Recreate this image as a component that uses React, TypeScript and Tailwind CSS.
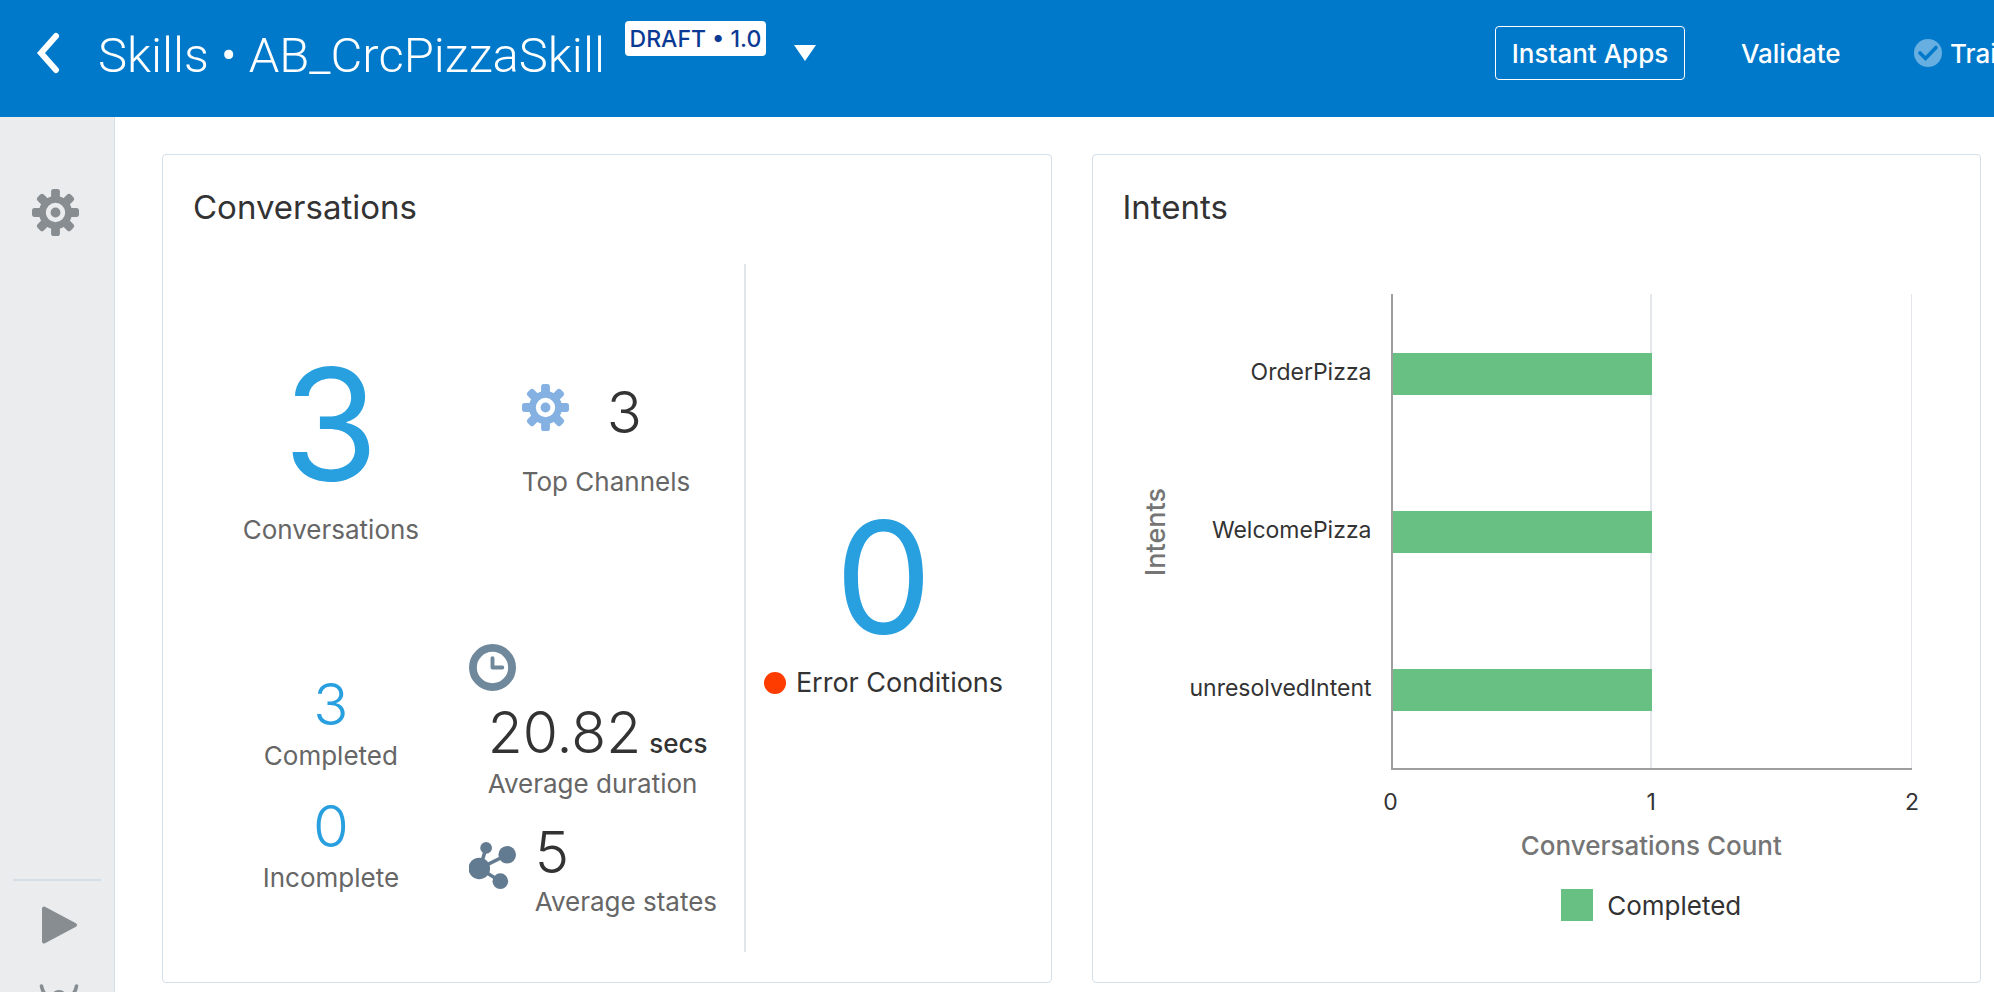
import React from "react";

type IconProps = { className?: string };

const TEETH = [0, 45, 90, 135, 180, 225, 270, 315];

function Gear({ className }: IconProps) {
  return (
    <svg viewBox="-24 -24 48 48" className={className} fill="currentColor" aria-hidden="true">
      {TEETH.map((angle) => (
        <rect key={angle} x="-4.5" y="-24" width="9" height="12" rx="2.6" transform={`rotate(${angle})`} />
      ))}
      <circle r="13.4" fill="none" stroke="currentColor" strokeWidth="7" />
      <circle r="5" />
    </svg>
  );
}

function Clock({ className }: IconProps) {
  return (
    <svg viewBox="0 0 48 48" className={className} fill="none" stroke="currentColor" aria-hidden="true">
      <circle cx="24" cy="24" r="20" strokeWidth="8" />
      <path d="M24 14.5V24h10" strokeWidth="4" strokeLinecap="round" strokeLinejoin="round" />
    </svg>
  );
}

function Nodes({ className }: IconProps) {
  return (
    <svg viewBox="0 0 48 48" className={className} fill="currentColor" aria-hidden="true">
      <path d="M11 27 17.5 6M11 27 39 13M11 27l21 13" stroke="currentColor" strokeWidth="3.6" fill="none" />
      <circle cx="10.5" cy="27" r="11" />
      <circle cx="17.5" cy="6" r="6" />
      <circle cx="39" cy="13" r="9" />
      <circle cx="32" cy="40" r="8" />
    </svg>
  );
}

function Header() {
  return (
    <header className="flex h-[117px] shrink-0 items-start overflow-hidden bg-[#0079cb] text-white">
      <button type="button" aria-label="Back" className="ml-9 mt-8 h-[42px] w-6 shrink-0">
        <svg viewBox="0 0 24 42" className="h-full w-full" fill="none" aria-hidden="true">
          <path d="M20 4 5 21l15 17" stroke="white" strokeWidth="6" strokeLinecap="round" />
        </svg>
      </button>
      <h1 className="ml-[38px] mt-7 whitespace-nowrap font-['Roboto','Inter',sans-serif] text-[49px] font-light leading-[56px]">
        Skills • AB_CrcPizzaSkill
      </h1>
      <span className="ml-5 mt-[21px] h-[35px] w-[141px] shrink-0 whitespace-nowrap rounded bg-white text-center text-[23px] font-medium leading-[36px] text-[#0b3a94]">
        DRAFT • 1.0
      </span>
      <button type="button" aria-label="Select version" className="ml-7 mt-[45px] shrink-0">
        <svg viewBox="0 0 22 16" className="h-4 w-[22px]" fill="white" aria-hidden="true">
          <path d="M0 0h22L11 16z" />
        </svg>
      </button>
      <nav className="ml-auto mt-[26px] flex h-[54px] w-[499px] shrink-0 items-stretch text-[26px] font-medium leading-9">
        <button type="button" className="w-[190px] rounded-[4px] border border-white pt-[2px]">
          Instant Apps
        </button>
        <button type="button" className="ml-14 pt-[2px]">
          Validate
        </button>
        <button type="button" className="ml-auto flex w-20 items-center gap-2 overflow-hidden">
          <svg viewBox="0 0 28 28" className="h-7 w-7 shrink-0" aria-hidden="true">
            <circle cx="14" cy="14" r="14" fill="#66afe0" />
            <path d="m6 14 5.500 5.500L22 8.500" fill="none" stroke="#0079cb" strokeWidth="3.600" strokeLinecap="round" />
          </svg>
          <span className="pt-[2px]">Train</span>
        </button>
      </nav>
    </header>
  );
}

function Sidebar() {
  return (
    <aside className="flex w-[115px] shrink-0 flex-col items-center overflow-hidden border-r border-[#d3dfe9] bg-[#eaecee] text-[#878d91]">
      <button type="button" aria-label="Settings" className="mr-1 mt-[72px]">
        <Gear className="h-[47px] w-[47px]" />
      </button>
      <div className="mt-auto w-[88px] shrink-0 border-t-2 border-[#d3dfe9]" />
      <button type="button" aria-label="Run" className="ml-[6px] mt-6">
        <svg viewBox="0 0 36 40" className="h-10 w-9" fill="currentColor" aria-hidden="true">
          <path d="M2 3.500 33 20 2 36.500z" stroke="currentColor" strokeWidth="4" strokeLinejoin="round" />
        </svg>
      </button>
      <button type="button" aria-label="Debug" className="ml-1 mt-[38px] h-[9px] overflow-hidden">
        <svg viewBox="0 0 40 40" className="h-10 w-10" fill="none" stroke="currentColor" strokeWidth="3.600" strokeLinecap="round" aria-hidden="true">
          <path d="M2.500 3c1 6 4 10 9 12M37.500 3c-1 6-4 10-9 12" />
          <ellipse cx="20" cy="22" rx="11" ry="15" fill="currentColor" stroke="none" />
        </svg>
      </button>
    </aside>
  );
}

function Card({ title, children }: { title: string; children: React.ReactNode }) {
  return (
    <section className="flex min-w-0 flex-1 flex-col rounded-[4px] border border-[#d3dfe9] px-[30px] pb-[30px] pt-8 text-[#333]">
      <h2 className="text-[33px] leading-10">{title}</h2>
      <div className="mt-[37px] flex min-h-0 flex-1">{children}</div>
    </section>
  );
}

function Label({ children }: { children: React.ReactNode }) {
  return <div className="whitespace-nowrap text-[26px] leading-9 text-[#666]">{children}</div>;
}

function Conversations() {
  return (
    <Card title="Conversations">
      <div className="grid flex-1 grid-cols-[101fr_50fr]">
        <div className="grid grid-cols-2 border-r-2 border-[#dfe6ec]">
          <div className="flex flex-col items-center pt-[84px]">
            <div className="text-[154px] leading-[152px] text-[#289fdf]">3</div>
            <div className="mt-3">
              <Label>Conversations</Label>
            </div>
            <div className="mt-32 text-[58px] font-light leading-[56px] text-[#289fdf]">3</div>
            <div className="mt-[6px]">
              <Label>Completed</Label>
            </div>
            <div className="mt-6 text-[58px] font-light leading-[56px] text-[#289fdf]">0</div>
            <div className="mt-[6px]">
              <Label>Incomplete</Label>
            </div>
          </div>
          <div className="flex flex-col pt-[120px]">
            <div className="pl-[53px]">
              <div className="flex items-start gap-[38px]">
                <Gear className="h-[47px] w-[47px] text-[#84b1e1]" />
                <div className="text-[58px] font-light leading-[56px]">3</div>
              </div>
              <div className="mt-6">
                <Label>Top Channels</Label>
              </div>
            </div>
            <Clock className="mt-36 h-[47px] w-[47px] text-[#6f889b]" />
            <div className="mt-[14px] pl-[19px]">
              <div className="flex items-baseline gap-2 whitespace-nowrap text-[57px] font-light leading-[56px]">
                20.82 <span className="text-[26px] font-medium leading-9">secs</span>
              </div>
              <div className="mt-1">
                <Label>Average duration</Label>
              </div>
            </div>
            <div className="mt-[22px] flex items-start gap-[19px]">
              <Nodes className="mt-[18px] h-[47px] w-[47px] shrink-0 text-[#637b90]" />
              <div>
                <div className="text-[58px] font-light leading-[56px]">5</div>
                <div className="mt-1">
                  <Label>Average states</Label>
                </div>
              </div>
            </div>
          </div>
        </div>
        <div className="flex flex-col items-center justify-center pb-[14px]">
          <div className="text-[154px] leading-[152px] text-[#289fdf]">0</div>
          <div className="mt-3 flex items-center gap-[10px] whitespace-nowrap text-[27px] leading-9">
            <span className="h-[22px] w-[22px] shrink-0 rounded-full bg-[#ff3c00]" />
            Error Conditions
          </div>
        </div>
      </div>
    </Card>
  );
}

const INTENTS = [
  { name: "OrderPizza", completed: 1 },
  { name: "WelcomePizza", completed: 1 },
  { name: "unresolvedIntent", completed: 1 },
];
const AXIS_MAX = 2;

function Intents() {
  return (
    <Card title="Intents">
      <div className="grid flex-1 grid-cols-[36px_auto_1fr] content-start pl-[15px] pr-[38px] pt-[30px]">
        <div className="flex items-center justify-center">
          <span className="rotate-180 text-[27px] font-medium leading-9 text-[#757575] [writing-mode:vertical-rl]">
            Intents
          </span>
        </div>
        <div className="flex w-[217px] flex-col pr-[19px]">
          {INTENTS.map((intent) => (
            <div key={intent.name} className="flex h-[158px] items-center justify-end whitespace-nowrap pb-[2px] text-[23px]">
              {intent.name}
            </div>
          ))}
        </div>
        <div className="grid border-b-2 border-l-2 border-[#9e9e9e]">
          <div className="col-start-1 row-start-1 grid grid-cols-2">
            <div className="border-r-2 border-[#e4e8ec]" />
            <div className="border-r border-[#e4e8ec]" />
          </div>
          <div className="col-start-1 row-start-1 flex flex-col">
            {INTENTS.map((intent) => (
              <div key={intent.name} className="flex h-[158px] items-center pt-[2px]">
                <div className="h-[42px] bg-[#68c182]" style={{ width: `${(intent.completed / AXIS_MAX) * 100}%` }} />
              </div>
            ))}
          </div>
        </div>
        <div className="col-start-3 -mx-4 mt-4 flex justify-between text-[23px] leading-8">
          <span className="w-8 text-center">0</span>
          <span className="w-8 text-center">1</span>
          <span className="w-8 text-center">2</span>
        </div>
        <div className="col-start-3 mt-[10px] text-center text-[26px] font-medium leading-9 text-[#757575]">
          Conversations Count
        </div>
        <div className="col-start-3 mt-[25px] flex h-8 items-center justify-center gap-[14px] text-[26px]">
          <span className="h-8 w-8 bg-[#68c182]" />
          Completed
        </div>
      </div>
    </Card>
  );
}

export default function App() {
  return (
    <div className="flex h-screen flex-col overflow-hidden bg-white font-['Inter','Liberation_Sans',sans-serif]">
      <Header />
      <div className="flex min-h-0 flex-1">
        <Sidebar />
        <main className="flex min-w-0 flex-1 gap-10 pb-[9px] pl-[47px] pr-[13px] pt-[37px]">
          <Conversations />
          <Intents />
        </main>
      </div>
    </div>
  );
}
